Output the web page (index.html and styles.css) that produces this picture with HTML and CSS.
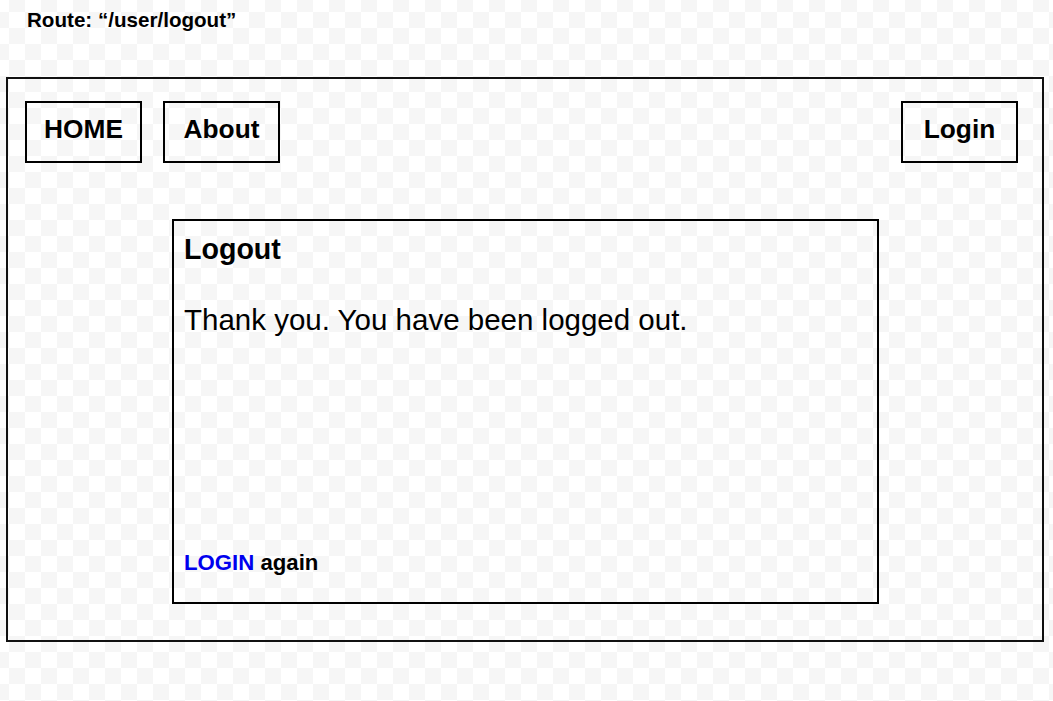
FILE: index.html
```html
<!DOCTYPE html>
<html lang="en">
<head>
<meta charset="utf-8">
<title>Logout</title>
<link rel="stylesheet" href="styles.css">
</head>
<body>
  <div class="route">Route: “/user/logout”</div>
  <div class="frame">
    <nav class="nav">
      <div class="nav-left">
        <a class="nav-btn" href="#">HOME</a>
        <a class="nav-btn" href="#">About</a>
      </div>
      <a class="nav-btn" href="#">Login</a>
    </nav>
    <main class="card">
      <h2 class="card-title">Logout</h2>
      <p class="card-msg">Thank you. You have been logged out.</p>
      <div class="card-foot"><a class="link" href="#">LOGIN</a> again</div>
    </main>
  </div>
</body>
</html>
```

FILE: styles.css
```css
html {
  background-color: #ffffff;
  background-image: repeating-conic-gradient(#f6f6f6 0 25%, #ffffff 0 50%);
  background-size: 32px 32px;
  background-position: 9px 12px;
}

body {
  margin: 0;
  font-family: "Liberation Sans", Arial, sans-serif;
  color: #000;
}

.route {
  padding: 8px 0 0 27px;
  height: 24px;
  line-height: 24px;
  font-size: 20.6px;
  font-weight: bold;
}

.frame {
  margin: 45px 9px 0 6px;
  height: 565px;
  box-sizing: border-box;
  border: 2px solid #111;
  padding: 22px 24px 0 17px;
  display: flex;
  flex-direction: column;
}

.nav {
  display: flex;
  justify-content: space-between;
  align-items: flex-start;
}

.nav-left {
  display: flex;
  gap: 21px;
}

.nav-btn {
  display: block;
  box-sizing: border-box;
  width: 117px;
  height: 62px;
  border: 2px solid #000;
  padding-top: 11px;
  text-align: center;
  font-size: 26.3px;
  line-height: 30px;
  font-weight: bold;
  color: #000;
  text-decoration: none;
}

.card {
  align-self: center;
  margin: 56px 0 0 8px;
  width: 707px;
  height: 385px;
  box-sizing: border-box;
  border: 2px solid #000;
  padding: 12px 10px 26px 10px;
  display: flex;
  flex-direction: column;
}

.card-title {
  margin: 0;
  font-size: 28.6px;
  line-height: 32px;
  font-weight: bold;
}

.card-msg {
  margin: 38px 0 0;
  font-size: 29.5px;
  line-height: 34px;
}

.card-foot {
  margin-top: auto;
  font-size: 22.2px;
  line-height: 26px;
  font-weight: bold;
}

.link {
  color: #0000ee;
  text-decoration: none;
}
```
